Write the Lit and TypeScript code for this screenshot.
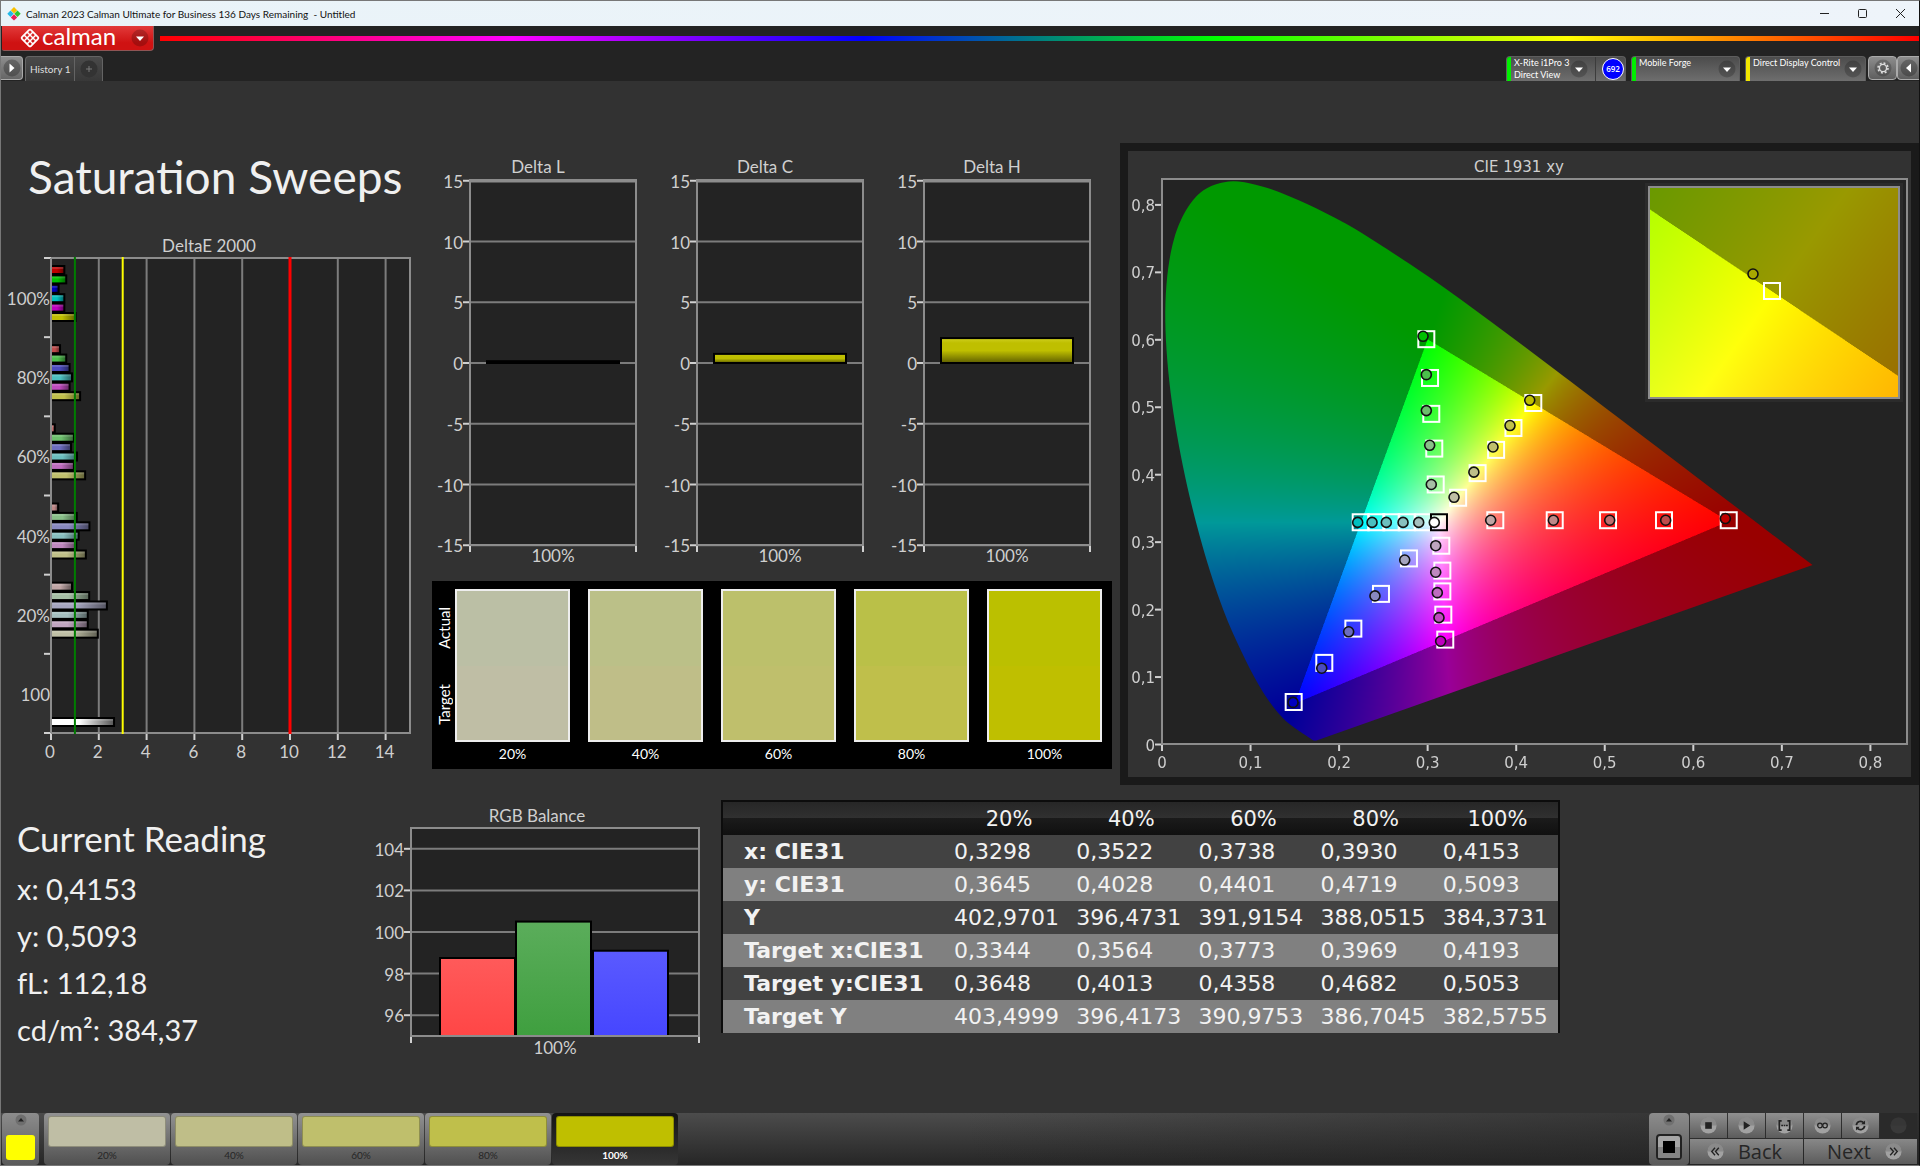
import { LitElement, html, svg, css } from "lit";
import { customElement, property } from "lit/decorators.js";

/* ---------- data ---------- */

const LEVELS = ["20%", "40%", "60%", "80%", "100%"];
const LOW = [165, 136, 108, 75, 0];
const HIGH = 191;

type Mask = [number, number, number];
const MASKS: Record<string, Mask> = {
  red: [1, 0, 0],
  green: [0, 1, 0],
  blue: [0, 0, 1],
  cyan: [0, 1, 1],
  magenta: [1, 0, 1],
  yellow: [1, 1, 0],
};
const HUES = Object.keys(MASKS);

const tint = (hue: string, level: number, shade = 1) =>
  `rgb(${MASKS[hue].map((on) => Math.round((on ? HIGH : LOW[level]) * shade)).join(",")})`;

const ACTUAL = ["#bbbfa5", "#bbc088", "#bcc06b", "#bac048", "#bbc000"];
const TARGET = ["#bfbea5", "#bfbe88", "#bfbf6c", "#bfbf4b", "#bfbf00"];

/* DeltaE per saturation level, ordered red, green, blue, cyan, magenta, yellow */
const DELTA_E: { label: string; level: number; values: number[] }[] = [
  { label: "100%", level: 4, values: [0.6, 0.68, 0.36, 0.6, 0.6, 1.07] },
  { label: "80%", level: 3, values: [0.42, 0.68, 0.82, 0.92, 0.82, 1.26] },
  { label: "60%", level: 2, values: [0.2, 1, 0.88, 1.13, 1, 1.47] },
  { label: "40%", level: 1, values: [0.34, 1.12, 1.65, 1.2, 1.1, 1.5] },
  { label: "20%", level: 0, values: [0.92, 1.64, 2.38, 1.58, 1.58, 2] },
];

const ROWS: [string, string[]][] = [
  ["x: CIE31", ["0,3298", "0,3522", "0,3738", "0,3930", "0,4153"]],
  ["y: CIE31", ["0,3645", "0,4028", "0,4401", "0,4719", "0,5093"]],
  ["Y", ["402,9701", "396,4731", "391,9154", "388,0515", "384,3731"]],
  ["Target x:CIE31", ["0,3344", "0,3564", "0,3773", "0,3969", "0,4193"]],
  ["Target y:CIE31", ["0,3648", "0,4013", "0,4358", "0,4682", "0,5053"]],
  ["Target Y", ["403,4999", "396,4173", "390,9753", "386,7045", "382,5755"]],
];

type XY = [number, number];
const SWEEPS: Record<string, { target: XY[]; actual: XY[] }> = {
  red: {
    target: [[0.3764, 0.3325], [0.4435, 0.3325], [0.5037, 0.3325], [0.5669, 0.3325], [0.64, 0.3325]],
    actual: [[0.3712, 0.3325], [0.442, 0.3325], [0.5056, 0.3325], [0.5688, 0.3325], [0.6362, 0.335]],
  },
  green: {
    target: [[0.3091, 0.3855], [0.3075, 0.4387], [0.3041, 0.4902], [0.3027, 0.5434], [0.2985, 0.6009]],
    actual: [[0.3041, 0.3855], [0.3023, 0.4436], [0.2985, 0.495], [0.2985, 0.5483], [0.2948, 0.6052]],
  },
  blue: {
    target: [[0.2789, 0.2759], [0.2473, 0.2233], [0.2161, 0.1718], [0.1833, 0.121], [0.1487, 0.063]],
    actual: [[0.2741, 0.2735], [0.2405, 0.2203], [0.2108, 0.1671], [0.1804, 0.1131], [0.148, 0.0624]],
  },
  cyan: {
    target: [[0.2951, 0.3295], [0.2763, 0.3295], [0.259, 0.3295], [0.242, 0.3295], [0.2244, 0.3295]],
    actual: [[0.2899, 0.3293], [0.2722, 0.3293], [0.2533, 0.3293], [0.2372, 0.3293], [0.221, 0.3293]],
  },
  magenta: {
    target: [[0.3154, 0.2947], [0.3166, 0.2578], [0.3166, 0.227], [0.3177, 0.1925], [0.3199, 0.1555]],
    actual: [[0.3091, 0.2947], [0.3091, 0.2554], [0.3109, 0.2251], [0.3128, 0.1881], [0.3147, 0.1531]],
  },
  yellow: {
    target: [[0.3344, 0.3658], [0.3564, 0.4023], [0.3773, 0.4368], [0.3969, 0.4692], [0.4193, 0.5063]],
    actual: [[0.3298, 0.3665], [0.3522, 0.4038], [0.3738, 0.4411], [0.393, 0.4729], [0.4153, 0.5103]],
  },
};

const LOCUS: XY[] = [
  [0.1741, 0.005], [0.1714, 0.0051], [0.1689, 0.0069], [0.1644, 0.0109], [0.1566, 0.0177], [0.144, 0.0297],
  [0.1355, 0.0399], [0.1241, 0.0578], [0.1096, 0.0868], [0.0913, 0.1327], [0.0687, 0.2007], [0.0454, 0.295],
  [0.0235, 0.4127], [0.0082, 0.5384], [0.0039, 0.6548], [0.0139, 0.7502], [0.0389, 0.812], [0.0743, 0.8338],
  [0.1142, 0.8262], [0.1547, 0.8059], [0.1929, 0.7816], [0.2296, 0.7543], [0.3016, 0.6923], [0.3731, 0.6245],
  [0.4441, 0.5547], [0.5125, 0.4866], [0.5752, 0.4242], [0.627, 0.3725], [0.6658, 0.334], [0.6915, 0.3083],
  [0.7347, 0.2653],
];

const PRIMARIES: XY[] = [[0.64, 0.33], [0.3, 0.6], [0.15, 0.06]];

/* ---------- shared chart styles ---------- */

const chartStyles = css`
  :host {
    display: block;
  }
  svg {
    display: block;
    width: 100%;
    height: auto;
  }
  text {
    font-family: Lato, "Open Sans", sans-serif;
    font-size: 17px;
    fill: #cfcfcf;
  }
  .plot {
    fill: #232323;
  }
  .frame {
    fill: none;
    stroke: #8c8c8c;
    stroke-width: 2;
  }
  .grid {
    stroke: #7c7c7c;
    stroke-width: 2;
  }
  .tick {
    stroke: #d0d0d0;
    stroke-width: 2;
  }
  .end {
    text-anchor: end;
  }
  .mid {
    text-anchor: middle;
  }
`;

/* ---------- DeltaE 2000 ---------- */

@customElement("delta-e-chart")
export class DeltaEChart extends LitElement {
  static styles = [
    chartStyles,
    css`
      .bar {
        stroke: #000;
        stroke-width: 2;
      }
      .good {
        stroke: #007d00;
        stroke-width: 2;
      }
      .warn {
        stroke: #ff0;
        stroke-width: 2;
      }
      .bad {
        stroke: #f00;
        stroke-width: 3;
      }
    `,
  ];

  render() {
    const left = 50;
    const top = 20;
    const bottom = 495;
    const band = (bottom - top) / 6;
    const X = (v: number) => left + v * 23.9;
    const bar = (v: number, y: number, id: string, from: string, to: string) => svg`
      <linearGradient id=${id}>
        <stop offset="0.45" stop-color=${from}></stop>
        <stop offset="1" stop-color=${to}></stop>
      </linearGradient>
      <rect class="bar" x=${left} y=${y} width=${X(v) - left - 1} height="8" fill="url(#${id})"></rect>
      <rect x=${left} y=${y + 1} width=${X(v) - left - 2} height="2" fill="#fff" opacity="0.15"></rect>`;
    return html`<svg viewBox="0 0 429 530" role="img" aria-label="DeltaE 2000">
      <text class="mid" x="208" y="14">DeltaE 2000</text>
      <rect class="plot" x=${left} y=${top} width="359" height="475"></rect>
      ${[2, 4, 6, 8, 10, 12, 14].map((v) => svg`<line class="grid" x1=${X(v)} x2=${X(v)} y1=${top} y2=${bottom}></line>`)}
      <rect class="frame" x=${left} y=${top} width="359" height="475"></rect>
      ${[0, 1, 2, 3, 4, 5, 6].map(
        (i) => svg`<line class="tick" x1="43" x2="50" y1=${top + i * band} y2=${top + i * band}></line>`
      )}
      ${[0, 2, 4, 6, 8, 10, 12, 14].map(
        (v) => svg`<line class="tick" x1=${X(v)} x2=${X(v)} y1="496" y2="502"></line>
          <text class="mid" x=${X(v) - 1} y="520">${v}</text>`
      )}
      ${DELTA_E.map(
        (g, gi) => svg`
          <text class="end" x="49" y=${top + gi * band + 47}>${g.label}</text>
          ${g.values.map((v, i) =>
            bar(v, top + gi * band + 8 + i * 9.4, `b${gi}${i}`, tint(HUES[i], g.level), tint(HUES[i], g.level, 0.5))
          )}`
      )}
      <text class="end" x="49" y=${top + 5 * band + 47}>100</text>
      ${bar(2.68, 480, "bw", "#ffffff", "#555555")}
      <line class="frame" x1=${left} x2=${left} y1=${top} y2=${bottom}></line>
      <line class="good" x1=${X(1)} x2=${X(1)} y1="19" y2="496"></line>
      <line class="warn" x1=${X(3)} x2=${X(3)} y1="19" y2="496"></line>
      <line class="bad" x1=${X(10)} x2=${X(10)} y1="19" y2="496"></line>
    </svg>`;
  }
}

/* ---------- Delta L / C / H ---------- */

@customElement("delta-chart")
export class DeltaChart extends LitElement {
  @property() heading = "";
  @property({ type: Number }) value = 0;

  static styles = [
    chartStyles,
    css`
      .bar {
        fill: url(#fill);
        stroke: #000;
        stroke-width: 2;
      }
      .cap {
        stroke: #8c8c8c;
        stroke-width: 3;
      }
    `,
  ];

  render() {
    const Y = (v: number) => 221 - v * 12.15;
    const ticks = [15, 10, 5, 0, -5, -10, -15];
    return html`<svg viewBox="0 0 227 430" role="img" aria-label=${this.heading}>
      <linearGradient id="fill" x2="0" y2="1">
        <stop offset="0" stop-color="#cfcf20"></stop>
        <stop offset="0.2" stop-color="#bfbf00"></stop>
        <stop offset="0.5" stop-color="#bfbf00"></stop>
        <stop offset="1" stop-color="#5e5e00"></stop>
      </linearGradient>
      <text class="mid" x="108" y="31">${this.heading}</text>
      <rect class="plot" x="40" y="38" width="166" height="365"></rect>
      ${ticks.map(
        (v) => svg`<line class="grid" x1="40" x2="206" y1=${Y(v)} y2=${Y(v)}></line>
          <line class="tick" x1="33" x2="39" y1=${Y(v)} y2=${Y(v)}></line>
          <text class="end" x="33" y=${Y(v) + 7}>${v}</text>`
      )}
      <rect class="frame" x="40" y="38" width="166" height="365"></rect>
      <line class="cap" x1="39" x2="207" y1="39" y2="39"></line>
      <line class="tick" x1="40" x2="40" y1="404" y2="410"></line>
      <line class="tick" x1="206" x2="206" y1="404" y2="410"></line>
      <rect class="bar" x="57" y=${Y(this.value)} width="132" height=${221 - Y(this.value)}></rect>
      <text class="mid" x="123" y="420">100%</text>
    </svg>`;
  }
}

/* ---------- RGB balance ---------- */

@customElement("rgb-balance")
export class RgbBalance extends LitElement {
  static styles = [
    chartStyles,
    css`
      .bar {
        stroke: #000;
        stroke-width: 2;
      }
    `,
  ];

  render() {
    const Y = (v: number) => 236 - (v - 95) * 20.8;
    const bars = [
      { x: 80, v: 98.75, a: "#ff5a5a", b: "#ff4646" },
      { x: 156, v: 100.5, a: "#5bad5b", b: "#3f9f3f" },
      { x: 233, v: 99.1, a: "#5a5aff", b: "#4646ff" },
    ];
    return html`<svg viewBox="0 0 361 265" role="img" aria-label="RGB Balance">
      <text class="mid" x="177" y="22">RGB Balance</text>
      <rect class="plot" x="51" y="28" width="288" height="208"></rect>
      ${[104, 102, 100, 98, 96].map(
        (v) => svg`<line class="grid" x1="51" x2="339" y1=${Y(v)} y2=${Y(v)}></line>
          <line class="tick" x1="44" x2="50" y1=${Y(v)} y2=${Y(v)}></line>
          <text class="end" x="44" y=${Y(v) + 7}>${v}</text>`
      )}
      ${bars.map(
        (b, i) => svg`
          <linearGradient id="g${i}" x2="0" y2="1">
            <stop offset="0" stop-color=${b.a}></stop>
            <stop offset="1" stop-color=${b.b}></stop>
          </linearGradient>
          <rect class="bar" x=${b.x} y=${Y(b.v)} width="75" height=${236 - Y(b.v)} fill="url(#g${i})"></rect>`
      )}
      <rect class="frame" x="51" y="28" width="288" height="208"></rect>
      <line class="tick" x1="51" x2="51" y1="237" y2="243"></line>
      <line class="tick" x1="339" x2="339" y1="237" y2="243"></line>
      <text class="mid" x="195" y="254">100%</text>
    </svg>`;
  }
}

/* ---------- CIE 1931 xy ---------- */

const SX = 885.5;
const SY = 674.5;

@customElement("cie-chart")
export class CieChart extends LitElement {
  static styles = [
    chartStyles,
    css`
      text {
        font-family: "DejaVu Sans", sans-serif;
        font-size: 15px;
      }
      canvas {
        display: block;
        width: 100%;
        height: 100%;
      }
      .target {
        fill: none;
        stroke: #fff;
        stroke-width: 2;
      }
      .white {
        stroke: #000;
      }
      .actual {
        stroke: #111;
        stroke-width: 1.6;
      }
      .inset {
        fill: none;
        stroke: #8c8c8c;
        stroke-width: 2;
      }
      .halo {
        fill: #2b2b2b;
      }
    `,
  ];

  firstUpdated() {
    const [gamut, inset] = Array.from(this.renderRoot.querySelectorAll("canvas"));
    this.paint(gamut, 0, 0, 745 / SX, 565 / SY, true);
    this.paint(inset, 0.3943, 0.4803, 0.05, 0.05, false);
  }

  /* Fills a canvas with chromaticity colours for the given xy window. */
  private paint(canvas: HTMLCanvasElement, x0: number, y0: number, w: number, h: number, clip: boolean) {
    const W = canvas.width;
    const H = canvas.height;
    const ctx = canvas.getContext("2d")!;
    const image = ctx.createImageData(W, H);
    const side = (p: XY, q: XY, x: number, y: number) => (q[0] - p[0]) * (y - p[1]) - (q[1] - p[1]) * (x - p[0]);
    const [r, g, b] = PRIMARIES;
    for (let j = 0; j < H; j++) {
      const y = Math.max(0.0005, y0 + h * (1 - (j + 0.5) / H));
      for (let i = 0; i < W; i++) {
        const x = x0 + (w * (i + 0.5)) / W;
        if (x + y > 1.01) continue;
        const X = x / y;
        const Z = (1 - x - y) / y;
        const rgb = [
          3.2406 * X - 1.5372 - 0.4986 * Z,
          -0.9689 * X + 1.8758 + 0.0415 * Z,
          0.0557 * X - 0.204 + 1.057 * Z,
        ].map((c) => Math.max(0, c));
        const top = Math.max(rgb[0], rgb[1], rgb[2]);
        const inside = side(r, g, x, y) >= 0 && side(g, b, x, y) >= 0 && side(b, r, x, y) >= 0;
        const k = inside ? 255 : 153;
        const o = (j * W + i) * 4;
        for (let c = 0; c < 3; c++) image.data[o + c] = (k * rgb[c]) / top;
        image.data[o + 3] = 255;
      }
    }
    ctx.putImageData(image, 0, 0);
    if (!clip) return;
    const P = LOCUS.map(([x, y]) => [((x - x0) / w) * W, H - ((y - y0) / h) * H]);
    ctx.globalCompositeOperation = "destination-in";
    ctx.beginPath();
    ctx.moveTo(P[0][0], P[0][1]);
    for (let i = 0; i < P.length - 1; i++) {
      const a = P[Math.max(0, i - 1)];
      const p = P[i];
      const q = P[i + 1];
      const d = P[Math.min(P.length - 1, i + 2)];
      ctx.bezierCurveTo(
        p[0] + (q[0] - a[0]) / 6, p[1] + (q[1] - a[1]) / 6,
        q[0] - (d[0] - p[0]) / 6, q[1] - (d[1] - p[1]) / 6,
        q[0], q[1]
      );
    }
    ctx.closePath();
    ctx.fill();
  }

  render() {
    const X = (v: number) => 34 + v * SX;
    const Y = (v: number) => 593.5 - v * SY;
    const label = (v: number) => (v ? v.toFixed(1).replace(".", ",") : "0");
    const steps = [0, 0.1, 0.2, 0.3, 0.4, 0.5, 0.6, 0.7, 0.8];
    const square = (x: number, y: number, extra = "") =>
      svg`<rect class="target ${extra}" x=${x - 8} y=${y - 8} width="16" height="16"></rect>`;
    const dot = (x: number, y: number, fill: string) =>
      svg`<circle class="actual" cx=${x} cy=${y} r="5" fill=${fill}></circle>`;
    return html`<svg viewBox="0 0 783 626" role="img" aria-label="CIE 1931 xy">
      <text class="mid" x="391" y="21">CIE 1931 xy</text>
      <rect class="plot" x="34" y="28" width="745" height="565"></rect>
      <foreignObject x="34" y="28" width="745" height="565"><canvas width="1490" height="1130"></canvas></foreignObject>
      <rect class="frame" x="34" y="28" width="745" height="565"></rect>
      ${steps.map(
        (v) => svg`
          <line class="tick" x1=${X(v)} x2=${X(v)} y1="594" y2="600"></line>
          <text class="mid" x=${X(v)} y="617">${label(v)}</text>
          <line class="tick" x1="27" x2="33" y1=${Y(v)} y2=${Y(v)}></line>
          <text class="end" x="27" y=${Y(v) + 6}>${label(v)}</text>`
      )}
      ${HUES.map((hue) => SWEEPS[hue].target.map(([x, y]) => square(X(x), Y(y))))}
      ${square(X(0.3128), Y(0.3295), "white")}
      ${HUES.map((hue) => SWEEPS[hue].actual.map(([x, y], i) => dot(X(x), Y(y), tint(hue, i))))}
      ${dot(X(0.3075), Y(0.3293), "#fff")}
      <rect class="halo" x="517" y="32" width="258" height="219"></rect>
      <foreignObject x="521" y="36" width="250" height="211"><canvas width="500" height="422"></canvas></foreignObject>
      <rect class="inset" x="521" y="36" width="250" height="211"></rect>
      ${square(644, 140)} ${dot(625, 123, "#a8a800")}
    </svg>`;
  }
}

/* ---------- icons ---------- */

const down = html`<svg class="knob" viewBox="0 0 18 18" aria-hidden="true">
  <circle cx="9" cy="9" r="8.5" fill="#000" opacity="0.2"></circle>
  <path d="M5 7.5h8l-4 4.5z" fill="#fff"></path>
</svg>`;

const round = (body: unknown) => html`<svg class="round" viewBox="0 0 18 18" aria-hidden="true">
  <circle cx="9" cy="9" r="8.5" fill="#a2a2a2"></circle>
  <path d="M.5 9a8.5 8.5 0 0 1 17 0z" fill="#6c6c6c" opacity="0.45"></path>
  ${body}
</svg>`;

/* ---------- page ---------- */

@customElement("app-root")
export class AppRoot extends LitElement {
  static styles = css`
    :host {
      display: flex;
      flex-direction: column;
      min-height: 100vh;
      box-sizing: border-box;
      border: 1px solid #777;
      border-right-color: #111;
      background: #323232;
      color: #f0f0f0;
      font-family: Lato, "Open Sans", sans-serif;
      overflow: hidden;
    }
    button {
      font: inherit;
      color: inherit;
      border: 0;
      margin: 0;
      padding: 0;
      background: none;
      cursor: pointer;
    }
    h1,
    h2,
    p {
      margin: 0;
      font-weight: 400;
    }
    .title {
      display: flex;
      align-items: center;
      height: 25px;
      padding-left: 6px;
      background: linear-gradient(90deg, #e9f3f8, #eef4fa);
      color: #111;
      font: 10px/24px Lato, sans-serif;
    }
    .title .name {
      flex: 1;
      margin-left: 5px;
      white-space: pre;
    }
    .gem {
      width: 14px;
      height: 14px;
    }
    .win {
      width: 38px;
      height: 24px;
      display: grid;
      place-items: center;
    }
    .win svg {
      width: 11px;
      height: 11px;
    }
    .top {
      background: #232323;
    }
    .brandbar {
      display: flex;
      align-items: flex-start;
      gap: 6px;
    }
    .brand {
      display: flex;
      align-items: center;
      width: 152px;
      height: 25px;
      margin-left: 1px;
      padding-left: 18px;
      box-sizing: border-box;
      background: linear-gradient(#e23a3a, #cf1212 70%);
      border: 1px solid #8f5555;
      border-top: 0;
      border-left: 0;
      border-radius: 0 0 4px 2px;
      color: #fff;
      font: 24px/24px Lato, sans-serif;
    }
    .brand .word {
      flex: 1;
      margin: -5px 0 0 2px;
      text-align: left;
    }
    .brand .mark {
      width: 20px;
      height: 20px;
    }
    .knob {
      flex: none;
      width: 18px;
      height: 18px;
    }
    .brand .knob {
      margin-right: 4px;
    }
    .spectrum {
      flex: 1;
      height: 5px;
      margin-top: 10px;
      background: linear-gradient(90deg, #f00, #f0f 20%, #00f 40%, #0f0 60%, #ff0 80%, #f00);
    }
    .tabs {
      display: flex;
      align-items: flex-end;
      height: 26px;
      margin-top: 4px;
    }
    .tabs .space {
      flex: 1;
    }
    .nav {
      width: 22px;
      height: 24px;
      margin: 0 2px 1px 0;
      box-sizing: border-box;
      display: grid;
      place-items: center;
      background: linear-gradient(#8d8d8d, #666);
      border: 1px solid #aaa;
      border-left: 0;
      border-radius: 0 4px 4px 0;
    }
    .nav svg,
    .gear svg {
      width: 18px;
      height: 18px;
    }
    .tab {
      height: 25px;
      padding: 0 4px;
      box-sizing: border-box;
      background: linear-gradient(#4a4a4a, #383838);
      border: 1px solid #646464;
      border-bottom: 0;
      border-radius: 4px 0 0 0;
      color: #dedede;
      font: 10px/24px Lato, sans-serif;
      white-space: nowrap;
    }
    .tab.add {
      width: 28px;
      border-left: 0;
      border-radius: 0 4px 0 0;
      display: grid;
      place-items: center;
    }
    .device {
      display: flex;
      align-items: flex-start;
      height: 25px;
      margin-right: 5px;
      box-sizing: border-box;
      overflow: hidden;
      background: linear-gradient(#4c4c4c, #6e6e6e);
      border: 1px solid #5e5e5e;
      border-bottom: 0;
      border-radius: 4px 4px 0 0;
      color: #fff;
      font: 9px/12px Lato, sans-serif;
      text-align: left;
      white-space: nowrap;
    }
    .device .knob {
      margin: 3px 3px 0 auto;
    }
    .device.meter .knob {
      margin-right: 7px;
    }
    .device .lines {
      padding-left: 3px;
    }
    .light {
      flex: none;
      width: 4px;
      align-self: stretch;
      background: #0e0;
    }
    .light.amber {
      background: #f2e600;
    }
    .meter {
      width: 120px;
    }
    .forge {
      width: 109px;
    }
    .display {
      width: 121px;
      margin-right: 2px;
    }
    .count {
      display: flex;
      flex: none;
      align-items: center;
      justify-content: flex-end;
      align-self: stretch;
      width: 30px;
      padding-right: 1px;
      box-sizing: border-box;
      border-left: 1px solid #3c3c3c;
    }
    .count b {
      width: 22px;
      height: 22px;
      box-sizing: border-box;
      border: 1px solid #fff;
      border-radius: 50%;
      background: #00f;
      font: 600 8px/20px "Open Sans", sans-serif;
      text-align: center;
    }
    .gear {
      width: 29px;
      height: 24px;
      margin-bottom: 1px;
      box-sizing: border-box;
      display: grid;
      place-items: center;
      background: linear-gradient(#8d8d8d, #5e5e5e);
      border: 1px solid #aaa;
      border-radius: 4px;
    }
    .gear.edge {
      width: 22px;
      border-right: 0;
      border-radius: 4px 0 0 4px;
    }
    main {
      flex: 1;
      padding-top: 61px;
    }
    .upper {
      display: grid;
      grid-template-columns: 429fr 690fr 799fr;
      align-items: start;
    }
    h1 {
      padding-left: 27px;
      margin-bottom: 26px;
      font-size: 46px;
      line-height: 70px;
      white-space: nowrap;
    }
    .deltas {
      display: grid;
      grid-template-columns: repeat(3, 1fr);
      padding-right: 9px;
    }
    .swatches {
      display: flex;
      margin: 9px 8px 0 2px;
      padding: 8px 10px 3px 0;
      background: #000;
      color: #fff;
      font-size: 14px;
      line-height: 24px;
      text-align: center;
    }
    .sides {
      display: flex;
      flex-direction: column;
      justify-content: space-around;
      align-items: center;
      width: 23px;
      height: 153px;
      font-size: 15px;
    }
    .sides span {
      writing-mode: vertical-rl;
      transform: rotate(180deg);
      line-height: 20px;
    }
    .chips {
      flex: 1;
      display: grid;
      grid-template-columns: repeat(5, 1fr);
      gap: 18px;
    }
    .chip {
      height: 153px;
      box-sizing: border-box;
      border: 2px solid #eee;
    }
    .cie {
      margin-top: 1px;
      border: 8px solid #1a1a1a;
      background: #323232;
    }
    .lower {
      display: grid;
      grid-template-columns: 359fr 361fr 839fr 359fr;
      align-items: start;
    }
    .reading {
      padding: 26px 0 0 16px;
      font-size: 29px;
      line-height: 47px;
    }
    h2 {
      font-size: 35px;
      line-height: 54px;
    }
    .lower rgb-balance,
    .data {
      margin-top: 15px;
    }
    .data {
      width: 100%;
      table-layout: fixed;
      border-collapse: collapse;
      border: 2px solid #0c0c0c;
      border-bottom: 0;
      font: 22px/32px "DejaVu Sans", sans-serif;
      color: #f2f2f2;
    }
    .data th,
    .data td {
      height: 33px;
      padding: 0 0 0 6px;
      box-sizing: border-box;
      text-align: left;
      white-space: nowrap;
    }
    .data thead tr {
      background: linear-gradient(#262626, #303030 50%, #1b1b1b 50%, #101010);
    }
    .data thead th {
      height: 34px;
      padding: 0;
      text-align: center;
      font-size: 21px;
      font-weight: 400;
    }
    .data .corner {
      width: 27%;
      height: 34px;
    }
    .data tbody tr {
      background: #424242;
    }
    .data tbody tr:nth-child(even) {
      background: #808080;
    }
    .data tbody th {
      padding-left: 21px;
    }
    footer {
      display: flex;
      height: 52px;
      background: linear-gradient(90deg, rgba(35, 35, 35, 0) 50%, rgba(35, 35, 35, 0.7)),
        linear-gradient(#4c4c4c, #262626);
      color: #262626;
    }
    .current,
    .source {
      display: flex;
      flex-direction: column;
      align-items: center;
      justify-content: space-between;
      box-sizing: border-box;
      border-radius: 4px;
      background: linear-gradient(#8c8c8c, #5a5a5a);
    }
    .current {
      flex: none;
      width: 37px;
      margin: 0 5px 0 1px;
      padding: 1px 0 5px;
    }
    .current .dot,
    .source .dot {
      width: 12px;
      height: 12px;
    }
    .now {
      width: 29px;
      height: 25px;
      border-radius: 3px;
      background: #ff0;
    }
    .tiles {
      display: flex;
      gap: 1px;
      flex: 1;
    }
    .tile {
      display: flex;
      flex-direction: column;
      flex: none;
      width: 126px;
      padding: 3px 4px 0;
      box-sizing: border-box;
      border-radius: 4px;
      background: linear-gradient(#929292, #505050);
      font-size: 10px;
      line-height: 17px;
      text-align: center;
    }
    .tile .fill {
      height: 31px;
      box-sizing: border-box;
      border: 1px solid rgba(0, 0, 0, 0.25);
      border-radius: 3px;
    }
    .tile.on {
      background: linear-gradient(#141414, #363636);
      color: #fff;
      font-weight: 700;
    }
    .source {
      flex: none;
      width: 40px;
      margin-right: 1px;
      padding: 1px 0 4px;
    }
    .source .stop {
      width: 28px;
      height: 28px;
    }
    .controls {
      display: grid;
      grid-template-columns: repeat(6, 37px);
      grid-template-rows: 25px 25px;
      gap: 1px;
      margin-right: 2px;
    }
    .ctl {
      display: flex;
      align-items: center;
      justify-content: center;
      background: linear-gradient(#909090, #5c5c5c);
    }
    .ctl .round {
      width: 17px;
      height: 17px;
    }
    .ctl.off {
      background: #2a2a2a;
    }
    .ctl.off .round {
      opacity: 0.12;
    }
    .wide {
      grid-column: span 3;
      gap: 14px;
      background: linear-gradient(#888, #5c5c5c);
      font: 20px/24px "Open Sans", sans-serif;
    }
    .wide.next {
      padding-left: 8px;
    }
    .wide.back {
      padding-right: 4px;
    }
  `;

  render() {
    return html`
      <div class="title">
        <svg class="gem" viewBox="0 0 14 14" aria-hidden="true">
          <path d="M7 0l3.2 3.2L7 6.4 3.8 3.2z" fill="#f8c000"></path>
          <path d="M3.5 3.6l3.2 3.2-3.2 3.2L.3 6.8z" fill="#22b8e8"></path>
          <path d="M10.5 3.6l3.2 3.2-3.2 3.2-3.2-3.2z" fill="#2fc52f"></path>
          <path d="M7 7.2l3.2 3.2L7 13.6l-3.2-3.2z" fill="#e8205a"></path>
        </svg>
        <span class="name">Calman 2023 Calman Ultimate for Business 136 Days Remaining  - Untitled</span>
        <button class="win" aria-label="Minimize">
          <svg viewBox="0 0 11 11"><path d="M1 5.5h9" stroke="#222"></path></svg>
        </button>
        <button class="win" aria-label="Maximize">
          <svg viewBox="0 0 11 11"><rect x="1.5" y="1.5" width="8" height="8" rx="1" fill="none" stroke="#222"></rect></svg>
        </button>
        <button class="win" aria-label="Close">
          <svg viewBox="0 0 11 11"><path d="M1 1l9 9M10 1l-9 9" stroke="#222"></path></svg>
        </button>
      </div>

      <header class="top">
        <div class="brandbar">
          <button class="brand">
            <svg class="mark" viewBox="0 0 20 20" aria-hidden="true">
              <g transform="rotate(45 10 10)" fill="none" stroke="#fff">
                <rect x="3.7" y="3.7" width="12.6" height="12.6" rx="1.6" stroke-width="1.7"></rect>
                <path d="M7.9 3.7v12.6M12.1 3.7v12.6M3.7 7.9h12.6M3.7 12.1h12.6" stroke-width="1.5"></path>
              </g>
            </svg>
            <span class="word">calman</span>
            ${down}
          </button>
          <div class="spectrum"></div>
        </div>
        <nav class="tabs">
          <button class="nav" aria-label="Expand left panel">
            <svg viewBox="0 0 18 18">
              <circle cx="9" cy="9" r="8.5" fill="#000" opacity="0.25"></circle>
              <path d="M6.5 4.5v9l5-4.5z" fill="#fff"></path>
            </svg>
          </button>
          <button class="tab">History 1</button>
          <button class="tab add" aria-label="Add tab">
            <svg width="18" height="18" viewBox="0 0 18 18">
              <circle cx="9" cy="9" r="8.5" fill="#333"></circle>
              <path d="M9 6v6M6 9h6" stroke="#7a7a7a"></path>
            </svg>
          </button>
          <span class="space"></span>
          <button class="device meter">
            <span class="light"></span>
            <span class="lines">X-Rite i1Pro 3<br />Direct View</span>
            ${down}
            <span class="count"><b>692</b></span>
          </button>
          <button class="device forge"><span class="light"></span><span class="lines">Mobile Forge</span>${down}</button>
          <button class="device display">
            <span class="light amber"></span><span class="lines">Direct Display Control</span>${down}
          </button>
          <button class="gear" aria-label="Settings">
            <svg viewBox="0 0 18 18">
              <circle cx="9" cy="9" r="8.5" fill="#000" opacity="0.2"></circle>
              <circle cx="9" cy="9" r="3.6" fill="none" stroke="#ddd" stroke-width="1.4"></circle>
              <circle cx="9" cy="9" r="5" fill="none" stroke="#ddd" stroke-width="1.6" stroke-dasharray="1.96 1.96"></circle>
            </svg>
          </button>
          <button class="gear edge" aria-label="Expand right panel">
            <svg viewBox="0 0 18 18">
              <circle cx="9" cy="9" r="8.5" fill="#000" opacity="0.25"></circle>
              <path d="M11 4.5v9l-5-4.5z" fill="#fff"></path>
            </svg>
          </button>
        </nav>
      </header>

      <main>
        <div class="upper">
          <section>
            <h1>Saturation Sweeps</h1>
            <delta-e-chart></delta-e-chart>
          </section>
          <section>
            <div class="deltas">
              <delta-chart heading="Delta L" value="0.15"></delta-chart>
              <delta-chart heading="Delta C" value="0.75"></delta-chart>
              <delta-chart heading="Delta H" value="2.05"></delta-chart>
            </div>
            <div class="swatches">
              <div class="sides"><span>Actual</span><span>Target</span></div>
              <div class="chips">
                ${LEVELS.map(
                  (label, i) => html`<div>
                    <div class="chip" style="background:linear-gradient(${ACTUAL[i]} 50%, ${TARGET[i]} 50%)"></div>
                    ${label}
                  </div>`
                )}
              </div>
            </div>
          </section>
          <section class="cie"><cie-chart></cie-chart></section>
        </div>

        <div class="lower">
          <section class="reading">
            <h2>Current Reading</h2>
            <p>x: 0,4153</p>
            <p>y: 0,5093</p>
            <p>fL: 112,18</p>
            <p>cd/m²: 384,37</p>
          </section>
          <rgb-balance></rgb-balance>
          <table class="data">
            <thead>
              <tr>
                <td class="corner"></td>
                ${LEVELS.map((l) => html`<th scope="col">${l}</th>`)}
              </tr>
            </thead>
            <tbody>
              ${ROWS.map(
                ([name, values]) => html`<tr>
                  <th scope="row">${name}</th>
                  ${values.map((v) => html`<td>${v}</td>`)}
                </tr>`
              )}
            </tbody>
          </table>
        </div>
      </main>

      <footer>
        <button class="current" aria-label="Current colour">
          <svg class="dot" viewBox="0 0 12 12">
            <circle cx="6" cy="6" r="5.5" fill="#6e6e6e"></circle>
            <path d="M3 7.5h6L6 4z" fill="#222"></path>
          </svg>
          <span class="now"></span>
        </button>
        <div class="tiles">
          ${LEVELS.map(
            (l, i) => html`<button class="tile ${i === 4 ? "on" : ""}">
              <span class="fill" style="background:${TARGET[i]}"></span>${l}
            </button>`
          )}
        </div>
        <button class="source" aria-label="Pattern window">
          <svg class="dot" viewBox="0 0 12 12">
            <circle cx="6" cy="6" r="5.5" fill="#707070"></circle>
            <path d="M3 7.5h6L6 4z" fill="#222"></path>
          </svg>
          <svg class="stop" viewBox="0 0 28 28">
            <rect x="2" y="2" width="24" height="24" rx="3" fill="#a6a6a6" stroke="#222" stroke-width="2"></rect>
            <path d="M3 14h22v10a1 1 0 0 1-1 1H4a1 1 0 0 1-1-1z" fill="#848484"></path>
            <rect x="8" y="8" width="12" height="12" fill="#000"></rect>
          </svg>
        </button>
        <div class="controls">
          <button class="ctl" aria-label="Stop">${round(svg`<path d="M5.5 5.5h7v7h-7z" fill="#222"></path>`)}</button>
          <button class="ctl" aria-label="Play">${round(svg`<path d="M6 4.5v9l7-4.5z" fill="#222"></path>`)}</button>
          <button class="ctl" aria-label="Read range">
            ${round(
              svg`<path d="M6 4H3.5v10H6M12 4h2.5v10H12" fill="none" stroke="#222" stroke-width="1.8"></path><path d="M5.5 9h2M8.2 9h1.6M10.5 9h2" stroke="#222" stroke-width="1.8"></path>`
            )}
          </button>
          <button class="ctl" aria-label="Continuous">
            ${round(
              svg`<g fill="none" stroke="#222" stroke-width="1.3"><circle cx="6.3" cy="9" r="2.4"></circle><circle cx="11.7" cy="9" r="2.4"></circle></g>`
            )}
          </button>
          <button class="ctl" aria-label="Refresh">
            ${round(
              svg`<path d="M4.6 8.5a4.5 4.5 0 0 1 7.8-2.4M13.4 9.5a4.5 4.5 0 0 1-7.8 2.4" fill="none" stroke="#222" stroke-width="1.8"></path><path d="M13.8 3.8v4h-4zM4.2 14.2v-4h4z" fill="#222"></path>`
            )}
          </button>
          <button class="ctl off" aria-label="Unavailable" disabled>${round(svg``)}</button>
          <button class="ctl wide back">
            ${round(svg`<path d="M8.5 5L5 9l3.5 4M12.5 5L9 9l3.5 4" fill="none" stroke="#222" stroke-width="1.4"></path>`)}Back
          </button>
          <button class="ctl wide next">
            Next${round(svg`<path d="M5.5 5L9 9l-3.5 4M9.5 5l3.5 4-3.5 4" fill="none" stroke="#222" stroke-width="1.4"></path>`)}
          </button>
        </div>
      </footer>
    `;
  }
}
